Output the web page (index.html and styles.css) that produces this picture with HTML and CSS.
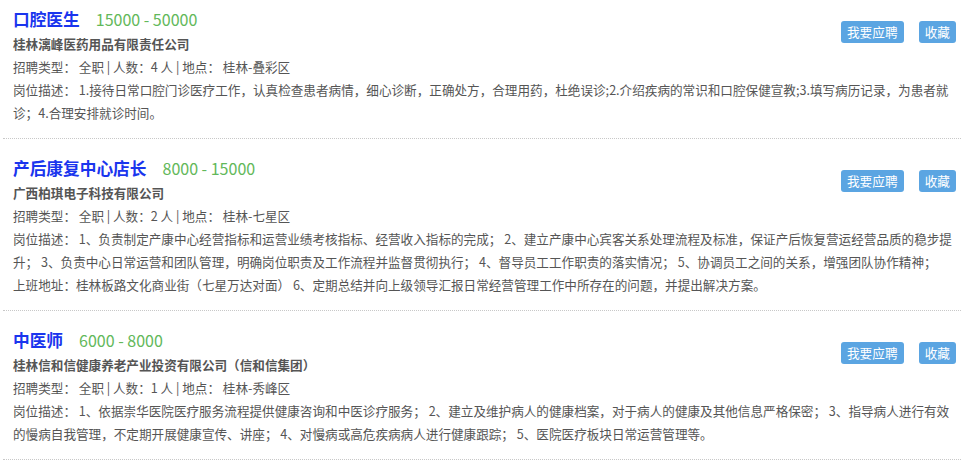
FILE: index.html
```html
<!DOCTYPE html>
<html lang="zh-CN">
<head>
    <meta charset="UTF-8">
    <meta name="viewport" content="width=device-width, initial-scale=1.0">
    <title>招聘信息</title>
    <link rel="stylesheet" href="styles.css">
</head>
<body>
    <div class="job-list">
        <div class="job">
            <div class="job-actions">
                <a class="btn" href="#">我要应聘</a>
                <a class="btn" href="#">收藏</a>
            </div>
            <h3 class="job-title">口腔医生<span class="salary">15000 - 50000</span></h3>
            <p class="company">桂林漓峰医药用品有限责任公司</p>
            <p class="meta">招聘类型：&nbsp;全职 | 人数：4 人 | 地点：&nbsp;桂林-叠彩区</p>
            <p class="desc">岗位描述：&nbsp;1.接待日常口腔门诊医疗工作，认真检查患者病情，细心诊断，正确处方，合理用药，杜绝误诊;2.介绍疾病的常识和口腔保健宣教;3.填写病历记录，为患者就诊；4.合理安排就诊时间。</p>
        </div>
        <div class="job">
            <div class="job-actions">
                <a class="btn" href="#">我要应聘</a>
                <a class="btn" href="#">收藏</a>
            </div>
            <h3 class="job-title">产后康复中心店长<span class="salary">8000 - 15000</span></h3>
            <p class="company">广西柏琪电子科技有限公司</p>
            <p class="meta">招聘类型：&nbsp;全职 | 人数：2 人 | 地点：&nbsp;桂林-七星区</p>
            <p class="desc">岗位描述：&nbsp;1、负责制定产康中心经营指标和运营业绩考核指标、经营收入指标的完成；&nbsp;2、建立产康中心宾客关系处理流程及标准，保证产后恢复营运经营品质的稳步提升；&nbsp;3、负责中心日常运营和团队管理，明确岗位职责及工作流程并监督贯彻执行；&nbsp;4、督导员工工作职责的落实情况；&nbsp;5、协调员工之间的关系，增强团队协作精神；<br>上班地址：桂林板路文化商业街（七星万达对面）&nbsp;6、定期总结并向上级领导汇报日常经营管理工作中所存在的问题，并提出解决方案。</p>
        </div>
        <div class="job">
            <div class="job-actions">
                <a class="btn" href="#">我要应聘</a>
                <a class="btn" href="#">收藏</a>
            </div>
            <h3 class="job-title">中医师<span class="salary">6000 - 8000</span></h3>
            <p class="company">桂林信和信健康养老产业投资有限公司（信和信集团）</p>
            <p class="meta">招聘类型：&nbsp;全职 | 人数：1 人 | 地点：&nbsp;桂林-秀峰区</p>
            <p class="desc">岗位描述：&nbsp;1、依据崇华医院医疗服务流程提供健康咨询和中医诊疗服务；&nbsp;2、建立及维护病人的健康档案，对于病人的健康及其他信息严格保密；&nbsp;3、指导病人进行有效的慢病自我管理，不定期开展健康宣传、讲座；&nbsp;4、对慢病或高危疾病病人进行健康跟踪；&nbsp;5、医院医疗板块日常运营管理等。</p>
        </div>
    </div>
</body>
</html>
```

FILE: styles.css
```css
body {
    margin: 0;
    background: #fff;
    font-family: "Noto Sans CJK SC", "Microsoft YaHei", sans-serif;
    font-size: 12.6px;
    color: #555;
}
.job-list {
    margin: -10px 0 0 3px;
}
.job {
    padding: 16px 5px 14px 10px;
    border-bottom: 1px dotted #c8c8c8;
}
.job-actions {
    float: right;
    margin-top: 15px;
    display: flex;
    gap: 15px;
}
.btn {
    display: block;
    height: 22px;
    line-height: 22px;
    padding: 0 6px;
    background: #5ba5e2;
    color: #fff;
    border-radius: 3px;
    text-decoration: none;
    font-size: 12.7px;
}
.job-title {
    margin: 0;
    font-size: 16.7px;
    line-height: 26px;
    font-weight: bold;
    color: #1a35ee;
}
.salary {
    margin-left: 16px;
    font-size: 16px;
    font-weight: normal;
    color: #62b85a;
}
.company,
.meta,
.desc {
    margin: 0;
    line-height: 23px;
}
.company {
    font-weight: bold;
}
```
